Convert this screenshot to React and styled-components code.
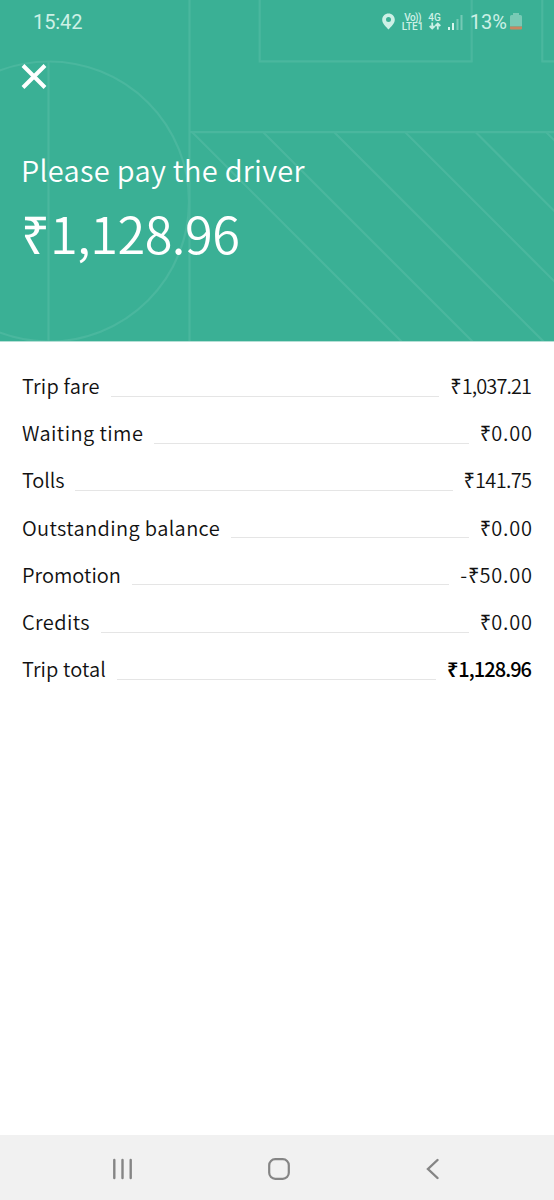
import React from 'react';
import styled, { createGlobalStyle } from 'styled-components';

const GlobalStyle = createGlobalStyle`
  * {
    box-sizing: border-box;
  }
  body {
    margin: 0;
    background: #fff;
  }
`;
const Screen = styled.div`
  display: flex;
  flex-direction: column;
  height: 1200px;
  width: 554px;
  overflow: hidden;
  background: #fff;
  color: #111;
  font-family: 'Noto Sans CJK SC', 'Noto Sans', sans-serif;
`;
const Header = styled.header`
  position: relative;
  height: 342px;
  flex: none;
  background: #3ab095;
  color: #fff;
  border-bottom: 1px solid #b4dfd5;
`;
const Pattern = styled.svg`
  position: absolute;
  top: 0;
  left: 0;
`;
const HeaderContent = styled.div`
  position: relative;
  display: flex;
  flex-direction: column;
`;
const StatusBar = styled.div`
  display: flex;
  align-items: center;
  justify-content: space-between;
  height: 44px;
  padding: 0 32px 0 33px;
  font-family: Roboto, sans-serif;
  font-size: 20px;
  color: #cdf0e6;
`;
const Clock = styled.span`
  letter-spacing: -0.1px;
`;
const StatusIcons = styled.div`
  display: flex;
  align-items: center;
  margin-top: -1px;
`;
const Network = styled.div`
  display: flex;
  flex-direction: column;
  align-items: center;
  margin-left: ${(props) => props.$gap}px;
  height: 18px;
  font-weight: 500;
  line-height: 9px;
`;
const NetworkType = styled.span`
  font-size: 10px;
  letter-spacing: ${(props) => props.$spacing || 0}px;
`;
const Signal = styled.svg`
  margin: 0 7px 0 7px;
`;
const Percent = styled.span`
  margin-top: 1px;
`;
const Battery = styled.svg`
  margin-left: 3px;
`;
const CloseButton = styled.button`
  display: flex;
  width: 26px;
  height: 26px;
  margin: 20px 0 0 21px;
  padding: 0;
  border: 0;
  background: none;
`;
const Title = styled.h1`
  margin: 59px 0 0 21px;
  font-size: 29px;
  font-weight: 350;
  line-height: 40px;
  letter-spacing: 0.3px;
  white-space: nowrap;
`;
const Total = styled.div`
  margin: 13px 0 0 21px;
  font-size: 50.5px;
  font-weight: 350;
  line-height: 60px;
  letter-spacing: -0.5px;
  white-space: nowrap;
`;
const Rupee = styled.span`
  font-family: 'Open Sans', 'Noto Sans', sans-serif;
  font-weight: ${(props) => (props.$bold ? 600 : 400)};
  letter-spacing: 0;
  line-height: 1;
`;
const FareList = styled.main`
  flex: 1;
  padding: 20px 22px 0;
`;
const FareRow = styled.div`
  display: flex;
  align-items: center;
  height: 47.2px;
  font-size: 20px;
  font-weight: 350;
  white-space: nowrap;
`;
const Label = styled.span`
  letter-spacing: ${(props) => props.$spacing}px;
`;
const Leader = styled.span`
  flex: 1;
  height: 1px;
  margin: 21px 11px 0 11px;
  background: #e5e5e5;
`;
const Amount = styled.span`
  color: ${(props) => (props.$bold ? '#000' : '#111')};
  font-weight: ${(props) => (props.$bold ? 500 : 350)};
  letter-spacing: ${(props) => props.$spacing}px;
  margin-right: ${(props) => -props.$spacing}px;
`;
const NavBar = styled.nav`
  display: flex;
  align-items: center;
  justify-content: space-between;
  height: 65px;
  padding: 2px 115px 0 108px;
  flex: none;
  background: #f1f1f1;
`;

const fares = [
  { label: 'Trip fare', amount: '1,037.21', labelSpacing: 0.2, spacing: -0.9 },
  { label: 'Waiting time', amount: '0.00', labelSpacing: 0.42, spacing: 0.8 },
  { label: 'Tolls', amount: '141.75', labelSpacing: -0.1, spacing: -0.65 },
  { label: 'Outstanding balance', amount: '0.00', labelSpacing: 0.37, spacing: 0.8 },
  { label: 'Promotion', amount: '50.00', labelSpacing: 0, spacing: 0.8, sign: '-' },
  { label: 'Credits', amount: '0.00', labelSpacing: 0.4, spacing: 0.8 },
  { label: 'Trip total', amount: '1,128.96', labelSpacing: 0.1, spacing: -0.95, bold: true },
];

const HeaderPattern = () => (
  <Pattern width='554' height='341' fill='none' stroke='#4ab79e' strokeWidth='2.2'>
    <circle cx='49' cy='201.5' r='140' />
    <path d='M48.5 61V341M189.5 0V341M259.7 0V61.3H471.7V0M542.3 0V61.3H554M189 132.2H554' />
    <path d='M192 132L402 342M263 132L473 342M334 132L544 342M405 132L615 342M475.5 132L685 342M546 132L756 342' />
  </Pattern>
);

const App = () => (
  <Screen>
    <GlobalStyle />
    <Header>
      <HeaderPattern />
      <HeaderContent>
        <StatusBar>
          <Clock>15:42</Clock>
          <StatusIcons>
            <svg width='13' height='17' viewBox='0 0 13 17'>
              <path
                fill='#cdf0e6'
                fillRule='evenodd'
                d='M6.5 0.5C3 0.5 0.2 3.2 0.2 6.7C0.2 10.5 4 13.5 6.5 16.5C9 13.5 12.8 10.5 12.8 6.7C12.8 3.2 10 0.5 6.5 0.5ZM6.5 4A2.5 2.5 0 1 1 6.5 9A2.5 2.5 0 1 1 6.5 4Z'
              />
            </svg>
            <Network $gap={7}>
              <NetworkType $spacing={-0.6}>Vo))</NetworkType>
              <NetworkType>LTE1</NetworkType>
            </Network>
            <Network $gap={5}>
              <NetworkType>4G</NetworkType>
              <svg width='12' height='8' viewBox='0 0 12 8' fill='none' stroke='#cdf0e6' strokeWidth='1.8'>
                <path d='M3.2 0.5V6.5M0.7 4L3.2 6.5L5.7 4M8.8 7.5V1.5M6.3 4L8.8 1.5L11.3 4' />
              </svg>
            </Network>
            <Signal width='15' height='16' viewBox='0 0 15 16'>
              <path fill='#d8f4ec' d='M0 13h2v3H0zM4 9h2v7H4z' />
              <path fill='#75c9b5' d='M8.5 5h2v11h-2zM12.5 1h2v15h-2z' />
            </Signal>
            <Percent>13%</Percent>
            <Battery width='12' height='17' viewBox='0 0 12 17'>
              <path fill='#78cab5' d='M3 0h6v2h1.5q1.5 0 1.5 1.5V13.5H0V3.5Q0 2 1.5 2H3z' />
              <path fill='#c98660' d='M0 13.5h12v2q0 1-1 1H1q-1 0-1-1z' />
            </Battery>
          </StatusIcons>
        </StatusBar>
        <CloseButton aria-label='Close'>
          <svg width='26' height='26' viewBox='0 0 26 26' stroke='#fff' strokeWidth='4'>
            <path d='M2 1.5L24 23.5M24 1.5L2 23.5' />
          </svg>
        </CloseButton>
        <Title>Please pay the driver</Title>
        <Total>
          <Rupee>₹</Rupee>1,128.96
        </Total>
      </HeaderContent>
    </Header>
    <FareList>
      {fares.map((fare) => (
        <FareRow key={fare.label}>
          <Label $spacing={fare.labelSpacing}>{fare.label}</Label>
          <Leader />
          <Amount $bold={fare.bold} $spacing={fare.spacing}>
            {fare.sign}
            <Rupee $bold={fare.bold}>₹</Rupee>
            {fare.amount}
          </Amount>
        </FareRow>
      ))}
    </FareList>
    <NavBar>
      <svg width='24' height='22' viewBox='0 0 24 22' stroke='#858585' strokeWidth='2.4' strokeLinecap='round'>
        <path d='M6.3 2V20M14.5 2V20M22.7 2V20' />
      </svg>
      <svg width='22' height='22' viewBox='0 0 22 22' fill='none' stroke='#858585' strokeWidth='2.2'>
        <rect x='1.2' y='1.2' width='19.6' height='19.6' rx='6' />
      </svg>
      <svg width='14' height='22' viewBox='0 0 14 22' fill='none' stroke='#858585' strokeWidth='2.4' strokeLinecap='round'>
        <path d='M12.5 2L3 11L12.5 20' />
      </svg>
    </NavBar>
  </Screen>
);

export default App;
